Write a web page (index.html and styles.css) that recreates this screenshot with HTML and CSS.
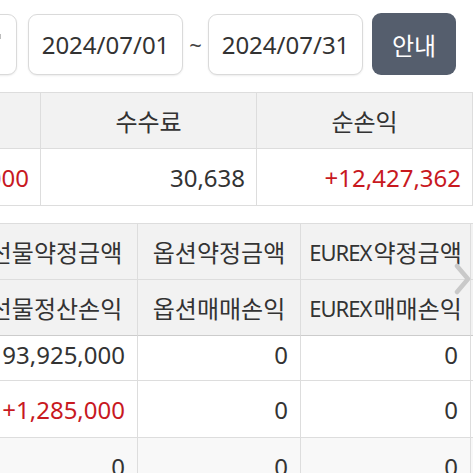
FILE: index.html
```html
<!DOCTYPE html>
<html lang="ko">
<head>
<meta charset="utf-8">
<link rel="stylesheet" href="styles.css">
</head>
<body>
<div class="page">
  <div class="top">
    <div class="field field-first"><span class="tick"></span></div>
    <div class="field">2024/07/01</div>
    <span class="tilde">~</span>
    <div class="field">2024/07/31</div>
    <button class="btn">안내</button>
  </div>

  <div class="t1">
    <div class="c hd">매매손익</div>
    <div class="c hd">수수료</div>
    <div class="c hd">순손익</div>
    <div class="c dt red">+12,458,000</div>
    <div class="c dt">30,638</div>
    <div class="c dt red">+12,427,362</div>
  </div>

  <div class="t2-wrap">
    <div class="t2">
      <div class="c hd h1">선물약정금액</div>
      <div class="c hd h1">옵션약정금액</div>
      <div class="c hd h1"><span class="lat">EUREX</span>약정금액</div>
      <div class="c hd h1">합계</div>

      <div class="c hd h2">선물정산손익</div>
      <div class="c hd h2">옵션매매손익</div>
      <div class="c hd h2"><span class="lat">EUREX</span>매매손익</div>
      <div class="c hd h2 lft">미니선물</div>

      <div class="c dt r1">93,925,000</div>
      <div class="c dt r1">0</div>
      <div class="c dt r1">0</div>
      <div class="c dt r1">0</div>

      <div class="c dt r2 red">+1,285,000</div>
      <div class="c dt r2">0</div>
      <div class="c dt r2">0</div>
      <div class="c dt r2">0</div>

      <div class="c dt r3">0</div>
      <div class="c dt r3">0</div>
      <div class="c dt r3">0</div>
      <div class="c dt r3">0</div>
    </div>
    <svg class="chev" width="18" height="32" viewBox="0 0 18 32"><polyline points="3,3 14,16 3,29" fill="none" stroke="#c9c9c9" stroke-width="4.5" stroke-linecap="round" stroke-linejoin="round"/></svg>
  </div>
</div>
</body>
</html>
```

FILE: styles.css
```css
html, body {
  margin: 0;
  padding: 0;
  background: #ffffff;
}
body {
  width: 473px;
  height: 473px;
  overflow: hidden;
  font-family: "Noto Sans", "Noto Sans CJK KR", sans-serif;
  color: #333333;
}
.page {
  width: 473px;
  overflow: hidden;
}
.top {
  display: flex;
  align-items: center;
  margin-left: -138px;
  padding-top: 13px;
  width: 700px;
}
.field {
  box-sizing: border-box;
  flex: none;
  width: 155px;
  height: 61px;
  border: 1px solid #dadada;
  border-radius: 9px;
  box-shadow: 0 1px 2px rgba(0, 0, 0, 0.08);
  display: flex;
  align-items: center;
  justify-content: center;
  font-size: 24px;
  color: #333333;
  background: #fff;
}
.field-first {
  margin-right: 11px;
  justify-content: flex-end;
  padding-right: 15px;
}
.tick {
  display: block;
  width: 2px;
  height: 5px;
  background: #bdbdbd;
  margin-top: -16px;
}
.tilde {
  flex: none;
  width: 25px;
  text-align: center;
  font-size: 22px;
  color: #444;
}
.btn {
  flex: none;
  margin-left: 9px;
  width: 84px;
  height: 62px;
  border: none;
  border-radius: 9px;
  background: #555e6d;
  color: #ffffff;
  font-family: "Noto Sans CJK KR", "Noto Sans", sans-serif;
  font-size: 24px;
  padding: 0;
}
.c {
  box-sizing: border-box;
  border-right: 1px solid #dddddd;
  border-bottom: 1px solid #dddddd;
  display: flex;
  align-items: center;
  white-space: nowrap;
  overflow: hidden;
}
.hd {
  background: #f2f2f2;
  justify-content: center;
  font-family: "Noto Sans CJK KR", "Noto Sans", sans-serif;
  font-size: 24px;
  color: #333;
}
.lat {
  font-family: "Noto Sans", sans-serif;
  font-size: 22px;
  letter-spacing: -1px;
  margin-right: 2px;
}
.dt {
  justify-content: flex-end;
  padding-right: 11px;
  font-size: 24px;
  color: #333;
  background: #fff;
}
.red {
  color: #c8191f;
}
.t1 {
  display: grid;
  grid-template-columns: 217px 216px 216px;
  grid-template-rows: 56px 57px;
  margin-top: 17px;
  margin-left: -176px;
  border-top: 1px solid #dddddd;
}
.t2-wrap {
  position: relative;
  margin-top: 17px;
}
.t2 {
  display: grid;
  grid-template-columns: 163px 163px 170px 170px;
  grid-template-rows: 56px 56px 45px 57px 57px;
  margin-left: -25px;
  border-top: 1px solid #dddddd;
}
.h2 {
  border-bottom-color: #cccccc;
}
.lft {
  justify-content: flex-start;
  padding-left: 1px;
}
.r1 {
  padding-bottom: 8px;
}
.r3 {
  background: #f8f8f8;
}
.t2 .dt {
  padding-right: 12px;
}
.chev {
  position: absolute;
  left: 454px;
  top: 40px;
}
```
